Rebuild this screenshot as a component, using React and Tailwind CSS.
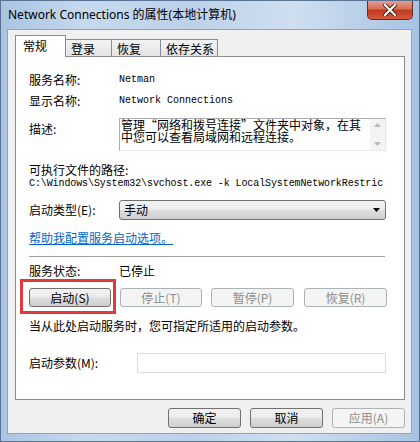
import React from 'react';

const cjk = { fontFamily: '"Noto Sans CJK SC", "Noto Sans", sans-serif' };
const mono = { fontFamily: '"Liberation Mono", "Noto Sans CJK SC", monospace' };

const WinButton = ({ children, disabled, className = '' }) => (
  <div
    className={`flex items-center justify-center rounded-[3px] border text-[12px] leading-none ${
      disabled
        ? 'border-[#adb2b5] bg-[#f4f4f4] text-[#8d8d8d]'
        : 'border-[#707070] bg-[linear-gradient(#f2f2f2_0%,#ebebeb_48%,#dddddd_52%,#cfcfcf_100%)] text-black'
    } ${className}`}
    style={cjk}
  >
    {children}
  </div>
);

const Tab = ({ label, active, width }) =>
  active ? (
    <div className={`relative z-10 -mr-px flex h-[22px] items-start border border-b-0 border-[#898c95] bg-white pl-[7px] pt-[2px] text-[12px] leading-[16px] ${width}`}>
      {label}
    </div>
  ) : (
    <div className={`-mr-px flex h-[18px] items-center border border-b-0 border-[#898c95] bg-[linear-gradient(#f3f3f3,#e3e3e3)] pl-[5px] text-[12px] leading-none ${width}`}>
      {label}
    </div>
  );

const Label = ({ children, className = '' }) => (
  <div className={`w-[90px] shrink-0 text-[12px] leading-[16px] ${className}`}>{children}</div>
);

export default function App() {
  return (
    <div
      className="relative h-[442px] w-[420px] overflow-hidden border border-[#5a7394] bg-[linear-gradient(90deg,#a9c4e2_0%,#c6d9ee_20%,#bcd1e9_45%,#cfdff0_70%,#a7c3e2_100%)] text-black"
      style={cjk}
    >
      {/* title bar */}
      <div className="flex h-[28px] items-center pl-[7px]">
        <span className="text-[12px] text-black" style={{ fontFamily: '"Noto Sans", "Noto Sans CJK SC", sans-serif' }}>
          Network Connections 的属性(本地计算机)
        </span>
      </div>
      <div className="absolute right-[6px] top-[-1px] flex h-[20px] w-[46px] items-center justify-center rounded-b-[5px] border border-t-0 border-[#6b2a22] bg-[linear-gradient(#e8a493_0%,#d86f5a_45%,#c13b21_55%,#d4593e_100%)]">
        <svg width="14" height="12" viewBox="0 0 14 12">
          <path d="M2 1 L12 11 M12 1 L2 11" stroke="#3a1a14" strokeWidth="4" strokeLinecap="square" />
          <path d="M2 1 L12 11 M12 1 L2 11" stroke="#ffffff" strokeWidth="2.2" strokeLinecap="square" />
        </svg>
      </div>

      {/* client area */}
      <div className="ml-[6px] h-[405px] w-[405px] border border-[#8aa4c2] bg-[#f0f0f0] pl-[7px] pt-[5px]">
        {/* tabs */}
        <div className="flex items-end">
          <Tab label="常规" active width="w-[51px]" />
          <Tab label="登录" width="w-[47px]" />
          <Tab label="恢复" width="w-[50px]" />
          <Tab label="依存关系" width="w-[58px]" />
        </div>

        {/* panel */}
        <div className="relative -mt-px flex h-[344px] w-[390px] flex-col border border-[#898c95] bg-white pl-[13px] pt-[15px]">
          <div className="flex items-center">
            <Label>服务名称:</Label>
            <span className="text-[10px] leading-[16px]" style={mono}>Netman</span>
          </div>
          <div className="mt-[5px] flex items-center">
            <Label>显示名称:</Label>
            <span className="text-[10px] leading-[16px]" style={mono}>Network Connections</span>
          </div>
          <div className="mt-[9px] flex items-start">
            <Label className="mt-[3px]">描述:</Label>
            <div className="flex h-[33px] w-[267px] border border-[#abadb3] border-b-[#e3e9ef] border-r-[#e3e9ef]">
              <div className="flex-1 pl-[1px] text-[12px] leading-[12px]">
                管理“网络和拨号连接”文件夹中对象，在其中您可以查看局域网和远程连接。
              </div>
              <div className="flex w-[15px] flex-col items-center justify-between bg-[#f3f3f3] py-[4px]">
                <svg width="7" height="4" viewBox="0 0 7 4"><path d="M0 4 L3.5 0 L7 4 Z" fill="#b8b8b8" /></svg>
                <svg width="7" height="4" viewBox="0 0 7 4"><path d="M0 0 L3.5 4 L7 0 Z" fill="#b8b8b8" /></svg>
              </div>
            </div>
          </div>
          <div className="mt-[11px] text-[12px] leading-[16px]">可执行文件的路径:</div>
          <div className="w-[358px] overflow-hidden whitespace-nowrap text-[10px] leading-[12px] tracking-[-0.1px]" style={mono}>
            C:\Windows\System32\svchost.exe -k LocalSystemNetworkRestric
          </div>
          <div className="mt-[10px] flex items-center">
            <Label>启动类型(E):</Label>
            <div className="flex h-[20px] w-[267px] items-center justify-between rounded-[3px] border border-[#707070] bg-[linear-gradient(#f2f2f2_0%,#ebebeb_48%,#dddddd_52%,#cfcfcf_100%)] pl-[4px] pr-[5px] text-[12px]">
              <span>手动</span>
              <svg width="7" height="4" viewBox="0 0 7 4"><path d="M0 0 L7 0 L3.5 4 Z" fill="#000" /></svg>
            </div>
          </div>
          <div className="mt-[10px] text-[12px] leading-[16px] text-[#0066cc] underline">帮助我配置服务启动选项。</div>
          <div className="mt-[10px] h-px w-[356px] bg-[#a0a0a0]" />
          <div className="mt-[6px] flex items-center">
            <Label>服务状态:</Label>
            <span className="text-[12px] leading-[16px]">已停止</span>
          </div>
          <div className="mt-[9px] flex gap-[9px]">
            <div className="relative">
              <WinButton className="h-[19px] w-[82px]">启动(S)</WinButton>
              <div className="absolute left-[-9px] top-[-9px] h-[35px] w-[96px] border-[3px] border-[#e0393e]" />
            </div>
            <WinButton disabled className="h-[19px] w-[82px]">停止(T)</WinButton>
            <WinButton disabled className="h-[19px] w-[83px]">暂停(P)</WinButton>
            <WinButton disabled className="ml-[1px] h-[19px] w-[83px]">恢复(R)</WinButton>
          </div>
          <div className="mt-[11px] text-[12px] leading-[16px]">当从此处启动服务时，您可指定所适用的启动参数。</div>
          <div className="mt-[19px] flex items-center">
            <Label className="w-[108px]">启动参数(M):</Label>
            <div className="h-[20px] w-[249px] border border-[#dcdcdc] bg-white" />
          </div>
        </div>

        {/* bottom buttons */}
        <div className="mt-[8px] flex w-[390px] justify-end gap-[9px]">
          <WinButton className="h-[20px] w-[73px]">确定</WinButton>
          <WinButton className="h-[20px] w-[73px]">取消</WinButton>
          <WinButton disabled className="h-[20px] w-[73px]">应用(A)</WinButton>
        </div>
      </div>
    </div>
  );
}
